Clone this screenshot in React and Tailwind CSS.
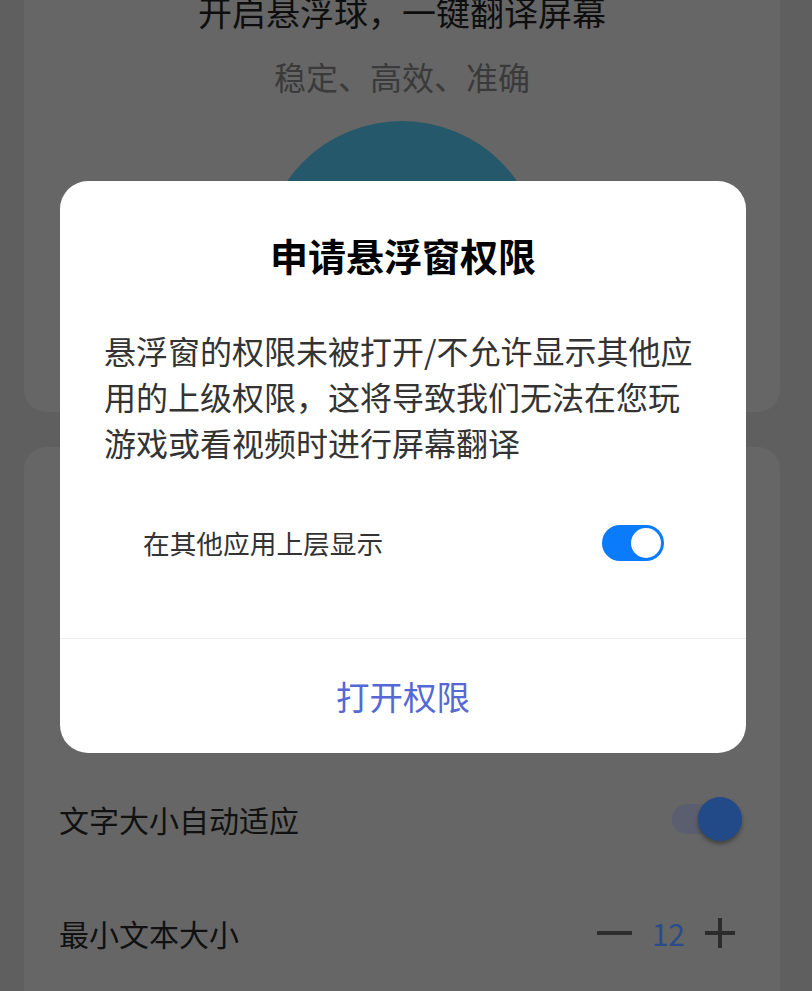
import React from 'react';

const cjk = { fontFamily: '"Noto Sans CJK SC", "Noto Sans", sans-serif' };

const DimToggle = () => (
    <div className="relative w-[72px] h-[44px] flex items-center">
        <div className="w-[48px] h-[30px] rounded-full bg-[#5a5e6e] ml-[2px]" />
        <div className="absolute right-0 top-0 w-[44px] h-[44px] rounded-full bg-[#234a88] shadow-[0_3px_4px_rgba(0,0,0,0.35)]" />
    </div>
);

const Switch = () => (
    <div className="w-[62px] h-[36px] rounded-full bg-[#0a7bfb] flex items-center justify-end pr-[3px]">
        <div className="w-[30px] h-[30px] rounded-full bg-white" />
    </div>
);

export default function App() {
    return (
        <div style={cjk} className="relative w-[812px] h-[991px] overflow-hidden bg-[#5f5f60]">
            <div className="flex flex-col pl-[24px] pr-[32px]">
                {/* top card */}
                <div className="h-[412px] bg-[#666666] rounded-b-[22px] flex flex-col items-center overflow-hidden">
                    <p className="text-[34px] leading-[40px] text-[#0e0e0e] mt-[-8px]">开启悬浮球，一键翻译屏幕</p>
                    <p className="text-[32px] leading-[40px] text-[#3a3a3a] mt-[24px]">稳定、高效、准确</p>
                    <div className="w-[280px] h-[280px] rounded-full bg-[#25586a] mt-[25px] shrink-0" />
                </div>

                {/* settings card */}
                <div className="mt-[35px] h-[600px] bg-[#666666] rounded-t-[22px] pl-[35px] pr-[38px] pt-[350px]">
                    <div className="flex items-center justify-between h-[44px]">
                        <span className="text-[30px] text-[#111111]">文字大小自动适应</span>
                        <DimToggle />
                    </div>
                    <div className="flex items-center justify-between h-[40px] mt-[72px]">
                        <span className="text-[30px] text-[#111111]">最小文本大小</span>
                        <div className="flex items-center gap-[20px] mr-[7px]">
                            <div className="w-[35px] h-[4px] bg-[#2c2c2c]" />
                            <span className="text-[30px] leading-[40px] text-[#2a4c88]">12</span>
                            <div className="relative w-[30px] h-[30px]">
                                <div className="absolute left-0 top-[13px] w-[30px] h-[4px] bg-[#2c2c2c]" />
                                <div className="absolute top-0 left-[13px] w-[4px] h-[30px] bg-[#2c2c2c]" />
                            </div>
                        </div>
                    </div>
                </div>
            </div>

            {/* permission dialog */}
            <div className="absolute inset-0 flex justify-center pt-[181px]">
                <div className="w-[686px] h-[572px] bg-white rounded-[28px] flex flex-col ml-[-6px]">
                    <h2 className="text-[38px] leading-[50px] font-bold text-black text-center mt-[49px]">申请悬浮窗权限</h2>
                    <p className="text-[32px] leading-[46px] text-[#333333] pl-[44px] pr-[40px] mt-[47px]">
                        悬浮窗的权限未被打开/不允许显示其他应用的上级权限，这将导致我们无法在您玩游戏或看视频时进行屏幕翻译
                    </p>
                    <div className="flex items-center justify-between pl-[83px] pr-[82px] mt-[60px] h-[36px]">
                        <span className="text-[26.7px] text-[#333333]">在其他应用上层显示</span>
                        <Switch />
                    </div>
                    <div className="mt-auto h-[115px] border-t border-[#eeeeee] flex items-center justify-center">
                        <span className="text-[33.5px] text-[#5468d6]">打开权限</span>
                    </div>
                </div>
            </div>
        </div>
    );
}
